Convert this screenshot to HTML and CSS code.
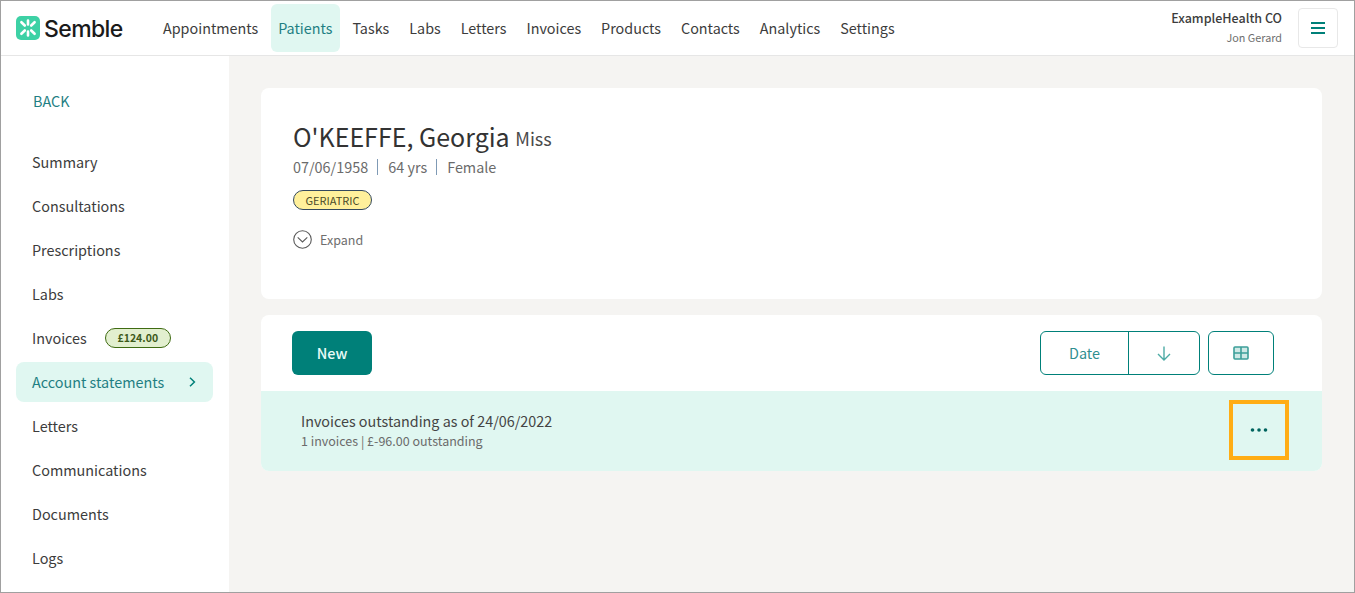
FILE: index.html
```html
<!DOCTYPE html>
<html lang="en">
<head>
<meta charset="utf-8">
<title>Semble</title>
<link rel="stylesheet" href="styles.css">
</head>
<body>
<div class="frame">
  <header class="topbar">
    <div class="logo">
      <svg class="logo-mark" width="24" height="24" viewBox="0 0 24 24">
        <rect width="24" height="24" rx="5" fill="#3dd1a5"/>
        <g stroke="#fff" stroke-width="2.6" stroke-linecap="round">
          <path d="M12 4.6v3.8M12 15.6v3.8M5.4 6.2l3.4 3.3M15.2 14.5l3.4 3.3M5.4 17.8l3.4-3.3M15.2 9.5l3.4-3.3"/>
        </g>
      </svg>
      <span class="logo-text">Semble</span>
    </div>
    <nav class="mainnav">
      <a class="navitem">Appointments</a>
      <a class="navitem active">Patients</a>
      <a class="navitem">Tasks</a>
      <a class="navitem">Labs</a>
      <a class="navitem">Letters</a>
      <a class="navitem">Invoices</a>
      <a class="navitem">Products</a>
      <a class="navitem">Contacts</a>
      <a class="navitem">Analytics</a>
      <a class="navitem">Settings</a>
    </nav>
    <div class="account">
      <div class="org">ExampleHealth CO</div>
      <div class="user">Jon Gerard</div>
    </div>
    <button class="menu-btn" aria-label="Menu">
      <svg width="14" height="12" viewBox="0 0 14 12"><path d="M0 1h14M0 6h14M0 11h14" stroke="#008079" stroke-width="2"/></svg>
    </button>
  </header>
  <div class="body">
    <aside class="sidebar">
      <a class="back">BACK</a>
      <ul class="sidenav">
        <li class="sideitem">Summary</li>
        <li class="sideitem">Consultations</li>
        <li class="sideitem">Prescriptions</li>
        <li class="sideitem">Labs</li>
        <li class="sideitem">Invoices <span class="amount">£124.00</span></li>
        <li class="sideitem current">Account statements
          <svg class="chev" width="7" height="10" viewBox="0 0 7 10"><path d="M1 .8 5.4 5 1 9.2" fill="none" stroke="#008079" stroke-width="1.5"/></svg>
        </li>
        <li class="sideitem">Letters</li>
        <li class="sideitem">Communications</li>
        <li class="sideitem">Documents</li>
        <li class="sideitem">Logs</li>
      </ul>
    </aside>
    <main class="content">
      <section class="card patient">
        <h1 class="name">O'KEEFFE, Georgia <small class="title">Miss</small></h1>
        <div class="meta">07/06/1958<span class="sep"></span>64 yrs<span class="sep"></span>Female</div>
        <span class="tag">GERIATRIC</span>
        <div class="expand">
          <svg width="19" height="19" viewBox="0 0 19 19"><circle cx="9.5" cy="9.5" r="8.8" fill="none" stroke="#5a5a5a" stroke-width="1.1"/><path d="M4.7 7.4 9.5 12l4.8-4.6" fill="none" stroke="#5a5a5a" stroke-width="1.1"/></svg>
          <span>Expand</span>
        </div>
      </section>
      <section class="card list">
        <div class="toolbar">
          <button class="btn-new">New</button>
          <div class="sort">
            <span class="sort-field">Date</span>
            <span class="sort-dir">
              <svg width="14" height="15" viewBox="0 0 14 15"><path d="M7 .5v13.4M1 7.9l6 6 6-6" fill="none" stroke="#4dabA5" stroke-width="1.4"/></svg>
            </span>
          </div>
          <button class="view-btn" aria-label="Table view">
            <svg width="16" height="14" viewBox="0 0 16 14"><rect x="1" y="1" width="14" height="12" rx="1" fill="#cfe9e6" stroke="#3c9f99" stroke-width="1.6"/><path d="M8 1v12M1 7h14" stroke="#3c9f99" stroke-width="1.6"/></svg>
          </button>
        </div>
        <div class="row">
          <div class="row-text">
            <div class="row-title">Invoices outstanding as of 24/06/2022</div>
            <div class="row-sub">1 invoices | £-96.00 outstanding</div>
          </div>
          <div class="more">
            <svg width="18" height="4" viewBox="0 0 18 4"><circle cx="2.5" cy="2" r="1.8" fill="#00645f"/><circle cx="9" cy="2" r="1.8" fill="#00645f"/><circle cx="15.5" cy="2" r="1.8" fill="#00645f"/></svg>
          </div>
        </div>
      </section>
    </main>
  </div>
</div>
</body>
</html>
```
FILE: styles.css
```css
* { box-sizing: border-box; }
html, body { margin: 0; padding: 0; }
body {
  font-family: "Noto Sans CJK SC", "Noto Sans", sans-serif;
  color: #3a3a3a;
  overflow: hidden;
}
.frame {
  width: 1355px;
  height: 593px;
  border: 1px solid #a0a0a0;
  display: flex;
  flex-direction: column;
  overflow: hidden;
  background: #fff;
}
.topbar {
  height: 55px;
  flex: none;
  display: flex;
  align-items: center;
  border-bottom: 1px solid #e6e6e6;
  padding: 0 16px 0 15px;
}
.logo { display: flex; align-items: center; width: 139.3px; flex: none; gap: 4px; }
.logo-mark { flex: none; }
.logo-text {
  font-family: Inter, sans-serif;
  font-size: 23px;
  font-weight: 500;
  letter-spacing: -0.6px;
  color: #1a1a1a;
  line-height: 24px;
  padding-top: 1px;
}
.mainnav { display: flex; align-items: center; flex: 1; gap: 4.6px; }
.navitem {
  font-size: 14.35px;
  line-height: 48px;
  height: 48px;
  padding: 0 7.7px;
  color: #3c3c3c;
  border-radius: 6px;
}
.navitem.active { background: #e0f7f1; color: #1f7f83; }
.account { text-align: right; margin-right: 16px; margin-bottom: 2px; }
.org { font-size: 12.5px; font-weight: 500; line-height: 18px; color: #3c3c3c; }
.user { font-size: 10.8px; line-height: 18px; margin-top: 1px; color: #6e6e6e; }
.menu-btn {
  width: 40px;
  height: 40px;
  background: #fff;
  border: 1px solid #e8e8e8;
  border-radius: 4px;
  display: flex;
  align-items: center;
  justify-content: center;
  padding: 0;
}
.body { flex: 1; display: flex; min-height: 0; }
.sidebar { width: 228px; flex: none; background: #fff; padding: 34px 16px 0 15px; }
.back { display: block; font-size: 14.4px; line-height: 22px; color: #1f7f83; padding-left: 17px; }
.sidenav { list-style: none; margin: 30px 0 0; padding: 0; display: flex; flex-direction: column; gap: 4px; }
.sideitem {
  height: 40px;
  display: flex;
  align-items: center;
  padding: 0 0 2px 16px;
  font-size: 14.4px;
  color: #3c3c3c;
  border-radius: 8px;
}
.sideitem.current { background: #e0f7f1; color: #1f7f83; justify-content: space-between; padding-right: 17px; }
.chev { margin-top: 2px; }
.amount {
  margin: 2px 0 0 18px;
  width: 66px;
  height: 20px;
  border: 1px solid #3f6b12;
  border-radius: 10px;
  background: #e2efcf;
  color: #3d5a1a;
  font-size: 10.5px;
  font-weight: 700;
  line-height: 18px;
  text-align: center;
}
.content {
  flex: 1;
  background: #f5f4f2;
  padding: 32px 32px 0;
  display: flex;
  flex-direction: column;
  gap: 16px;
}
.card { background: #fff; border-radius: 8px; }
.patient { height: 211px; padding: 30px 32px 0; }
.name { margin: 0; font-size: 25px; font-weight: 400; line-height: 36px; color: #333; }
.title { font-size: 18px; color: #4a4a4a; vertical-align: 1px; }
.meta { font-size: 14.4px; line-height: 22px; color: #6b6b6b; display: flex; align-items: center; }
.sep { width: 1px; height: 16px; background: #7f9ab5; margin: 0 10px 0 9px; }
.tag {
  display: block;
  width: 79px;
  height: 20px;
  margin-top: 12px;
  border: 1px solid #34495e;
  border-radius: 10px;
  background: #fff09b;
  color: #4a4a2a;
  font-size: 11px;
  line-height: 18px;
  text-align: center;
}
.expand { display: flex; align-items: center; gap: 8px; margin-top: 20px; font-size: 12.5px; line-height: 18px; color: #6e6e6e; }
.list { height: 156px; display: flex; flex-direction: column; }
.toolbar { height: 76px; flex: none; display: flex; align-items: flex-start; padding: 16px 48px 0 31px; }
.btn-new {
  width: 80px;
  height: 44px;
  border: 0;
  border-radius: 6px;
  background: #008079;
  color: #e9fbf8;
  font: 500 14.4px "Noto Sans CJK SC", sans-serif;
  padding: 0 0 2px;
  margin-right: auto;
}
.sort {
  width: 160px;
  height: 44px;
  display: flex;
  border: 1px solid #008079;
  border-radius: 6px;
  margin-right: 8px;
}
.sort-field {
  width: 88px;
  border-right: 1px solid #008079;
  display: flex;
  align-items: center;
  justify-content: center;
  font-size: 14.4px;
  color: #2f8f90;
  padding-bottom: 2px;
}
.sort-dir { flex: 1; display: flex; align-items: center; justify-content: center; }
.view-btn {
  width: 66px;
  height: 44px;
  border: 1px solid #008079;
  border-radius: 6px;
  background: #fff;
  display: flex;
  align-items: center;
  justify-content: center;
  padding: 0;
}
.row {
  flex: 1;
  background: #e0f7f1;
  border-radius: 0 0 8px 8px;
  display: flex;
  align-items: center;
  justify-content: space-between;
  padding: 0 33px 2px 40px;
}
.row-text { padding-top: 1px; }
.row-title { font-size: 14.35px; line-height: 20px; color: #444; }
.row-sub { font-size: 12.5px; line-height: 18px; margin-top: 1px; color: #6b6b6b; }
.more {
  width: 60px;
  height: 60px;
  border: 4px solid #ffad14;
  display: flex;
  align-items: center;
  justify-content: center;
}
```
